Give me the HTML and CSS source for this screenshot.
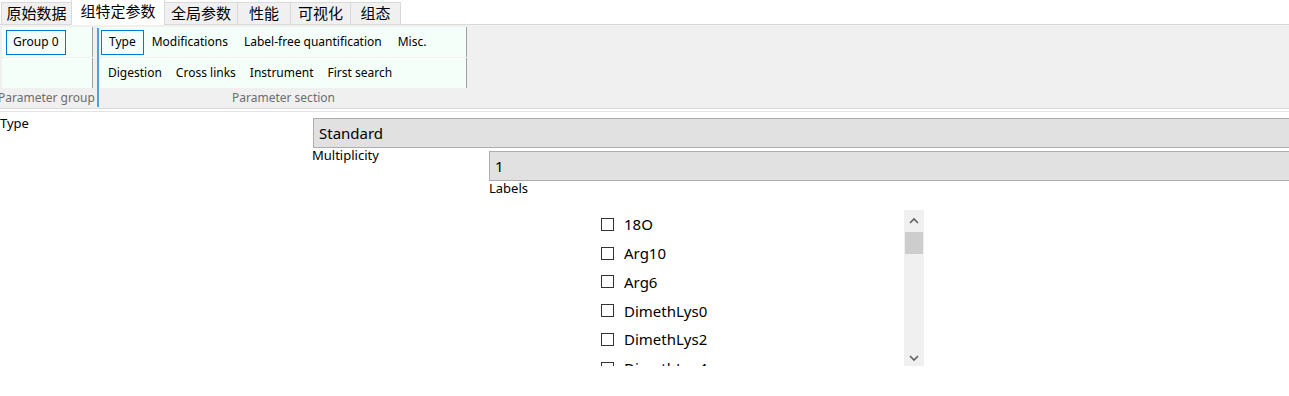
FILE: index.html
```html
<!DOCTYPE html>
<html lang="en">
<head>
  <meta charset="UTF-8">
  <title>Group-specific parameters</title>
  <link rel="stylesheet" href="styles.css">
</head>
<body>
  <div class="tabs">
    <div class="tab">原始数据</div>
    <div class="tab selected">组特定参数</div>
    <div class="tab">全局参数</div>
    <div class="tab">性能</div>
    <div class="tab">可视化</div>
    <div class="tab">组态</div>
  </div>

  <div class="ribbon">
    <div class="panel group-panel">
      <div class="rows">
        <div class="row first">
          <div class="item active">Group 0</div>
        </div>
        <div class="row"></div>
      </div>
      <div class="caption">Parameter group</div>
    </div>
    <div class="splitter"></div>
    <div class="panel section-panel">
      <div class="rows">
        <div class="row first">
          <div class="item active">Type</div>
          <div class="item">Modifications</div>
          <div class="item">Label-free quantification</div>
          <div class="item">Misc.</div>
        </div>
        <div class="row">
          <div class="item">Digestion</div>
          <div class="item">Cross links</div>
          <div class="item">Instrument</div>
          <div class="item">First search</div>
        </div>
      </div>
      <div class="caption">Parameter section</div>
    </div>
  </div>

  <div class="content">
    <div class="field">
      <div class="label type-label">Type</div>
      <div class="value type-value">
        <div class="box combo">Standard</div>
        <div class="field">
          <div class="label multi-label">Multiplicity</div>
          <div class="value">
            <div class="box number">1</div>
            <div class="label">Labels</div>
            <div class="checklist">
              <div class="items">
                <div class="check"><span class="tick"></span>18O</div>
                <div class="check"><span class="tick"></span>Arg10</div>
                <div class="check"><span class="tick"></span>Arg6</div>
                <div class="check"><span class="tick"></span>DimethLys0</div>
                <div class="check"><span class="tick"></span>DimethLys2</div>
                <div class="check"><span class="tick"></span>DimethLys4</div>
              </div>
              <div class="scrollbar">
                <svg class="arrow" width="20" height="22" viewBox="0 0 20 22"><polyline points="6,13 10,9 14,13" fill="none" stroke="#606060" stroke-width="1.6"/></svg>
                <div class="thumb"></div>
                <div class="track"></div>
                <svg class="arrow" width="20" height="16" viewBox="0 0 20 16"><polyline points="6,6 10,10 14,6" fill="none" stroke="#606060" stroke-width="1.6"/></svg>
              </div>
            </div>
          </div>
        </div>
      </div>
    </div>
  </div>
</body>
</html>
```

FILE: styles.css
```css
body {
  margin: 0;
  background: #fff;
  color: #000;
  font-family: 'Noto Sans', sans-serif;
  font-size: 12px;
  overflow: hidden;
}

.tabs {
  display: flex;
  align-items: flex-end;
  height: 24px;
  padding-left: 2px;
  border-bottom: 1px solid #d9d9d9;
}

.tab {
  height: 21px;
  background: #f0f0f0;
  border: 1px solid #d9d9d9;
  border-bottom: none;
  margin-left: -1px;
  font-family: 'Noto Sans CJK SC', sans-serif;
  font-size: 15px;
  line-height: 20px;
  text-align: center;
  color: #000;
}

.tab:nth-child(1) { width: 69px; }
.tab:nth-child(3) { width: 72px; }
.tab:nth-child(4) { width: 52px; }
.tab:nth-child(5) { width: 59px; }
.tab:nth-child(6) { width: 49px; }

.tab.selected {
  width: 92px;
  height: 25px;
  margin-bottom: -1px;
  background: #fff;
  line-height: 22px;
}

.ribbon {
  display: flex;
  height: 83px;
  background: #f0f0f0;
  border-bottom: 1px solid #dadada;
  box-shadow: 0 2px 0 #fff, 0 3px 0 #e3e3e3;
}

.panel {
  display: flex;
  flex-direction: column;
}

.rows {
  display: flex;
  flex-direction: column;
  gap: 1px;
  padding-top: 2px;
}

.row {
  display: flex;
  align-items: center;
  height: 30px;
  background: #f5fffa;
  border-right: 1px solid #a0a0a0;
  border-radius: 3px 0 0 3px;
}

.group-panel {
  width: 95px;
  padding-left: 2px;
  overflow: hidden;
}

.group-panel .row {
  width: 91px;
  padding-left: 4px;
  box-sizing: border-box;
}

.splitter {
  width: 2px;
  margin: 3px 1px 0 0;
  background: #4aa3df;
  height: 79px;
}

.section-panel {
  width: 367px;
}

.section-panel .row {
  padding-left: 1px;
}

.item {
  padding: 0 6px;
  height: 23px;
  line-height: 22px;
  border: 1px solid transparent;
  white-space: nowrap;
}

.section-panel .first .item {
  padding: 0 7px;
}

.item.active {
  border-color: #0078d7;
}

.caption {
  height: 17px;
  line-height: 20px;
  color: #6d6d6d;
  text-align: center;
  white-space: nowrap;
}

.group-panel .caption {
  text-align: left;
  margin-left: -4px;
}

.content {
  padding-top: 7px;
}

.field {
  display: flex;
}

.label {
  font-size: 13px;
  line-height: 15px;
  white-space: nowrap;
}

.type-label {
  width: 312px;
  flex: none;
}

.value {
  flex: 1;
  min-width: 0;
}

.box {
  height: 28px;
  background: #e1e1e1;
  border: 1px solid #adadad;
  border-right: none;
  font-size: 15px;
  line-height: 28px;
  padding-left: 5px;
}

.combo {
  margin: 2px 0 0 1px;
}

.multi-label {
  width: 177px;
  flex: none;
}

.number {
  margin-top: 3px;
}

.checklist {
  display: flex;
  width: 326px;
  height: 156px;
  margin: 14px 0 0 110px;
  overflow: hidden;
}

.items {
  flex: 1;
}

.check {
  display: flex;
  align-items: center;
  height: 28.75px;
  padding-left: 2px;
  font-size: 15px;
  flex: none;
}

.tick {
  width: 11px;
  height: 11px;
  border: 1px solid #333;
  margin-right: 10px;
  flex: none;
}

.scrollbar {
  display: flex;
  flex-direction: column;
  width: 20px;
  background: #f0f0f0;
  margin-right: 1px;
}

.arrow {
  flex: none;
}

.thumb {
  height: 22px;
  margin: 0 1px;
  background: #cdcdcd;
}

.track {
  flex: 1;
}
```
